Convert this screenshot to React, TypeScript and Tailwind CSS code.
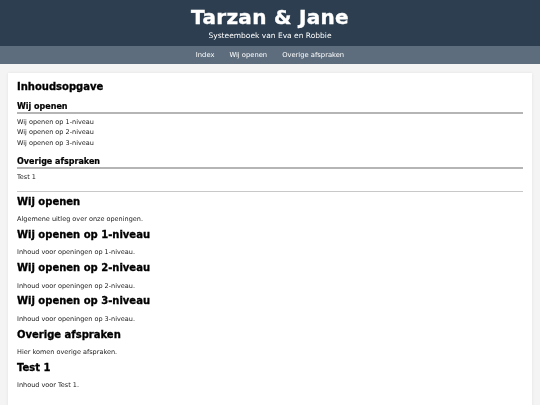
export default function App() {
  const toc = [
    { title: "Wij openen", items: ["Wij openen op 1-niveau", "Wij openen op 2-niveau", "Wij openen op 3-niveau"] },
    { title: "Overige afspraken", items: ["Test 1"] },
  ];
  const sections = [
    { title: "Wij openen", body: "Algemene uitleg over onze openingen." },
    { title: "Wij openen op 1-niveau", body: "Inhoud voor openingen op 1-niveau." },
    { title: "Wij openen op 2-niveau", body: "Inhoud voor openingen op 2-niveau." },
    { title: "Wij openen op 3-niveau", body: "Inhoud voor openingen op 3-niveau." },
    { title: "Overige afspraken", body: "Hier komen overige afspraken." },
    { title: "Test 1", body: "Inhoud voor Test 1." },
  ];

  return (
    <div className="min-h-screen bg-[#f4f4f4] text-[#1a1a1a]" style={{ fontFamily: "'DejaVu Sans', Verdana, sans-serif" }}>
      <header className="bg-[#2c3e50] text-white text-center h-[46px] pt-[5px]">
        <h1 className="text-[20px] font-bold leading-[24px] tracking-[0.3px] grayscale [-webkit-text-stroke:0.4px_white]">
          Tarzan &amp; Jane
        </h1>
        <p className="text-[7.5px] leading-[10px] mt-[2px] grayscale">Systeemboek van Eva en Robbie</p>
      </header>
      <nav className="bg-[#5d6d7e] h-[18px] flex justify-center items-center gap-[15px] text-white text-[6.75px]">
        <a className="grayscale">Index</a>
        <a className="grayscale">Wij openen</a>
        <a className="grayscale">Overige afspraken</a>
      </nav>

      <main className="mx-[8px] mt-[9px] bg-white px-[9px] pt-[6.5px] pb-[24px] shadow-[0_0_3px_rgba(0,0,0,0.08)] grayscale">
        <h2 className="text-[10px] font-bold text-black leading-[14px] mb-[8.5px] [-webkit-text-stroke:0.3px_black]">
          Inhoudsopgave
        </h2>
        {toc.map((g) => (
          <div key={g.title} className="mb-[9px]">
            <h3 className="text-[8px] font-bold text-black leading-[10px] border-b-2 border-[#b5b5b5] mb-[2.5px] [-webkit-text-stroke:0.2px_black]">
              {g.title}
            </h3>
            {g.items.map((i) => (
              <p key={i} className="text-[6.5px] leading-[10.5px]">{i}</p>
            ))}
          </div>
        ))}
        <hr className="border-0 border-t border-[#c8c8c8] mb-[2.5px]" />

        {sections.map((s) => (
          <section key={s.title}>
            <h2 className="text-[10px] font-bold text-black leading-[14px] mb-[5.5px] [-webkit-text-stroke:0.3px_black]">
              {s.title}
            </h2>
            <p className="text-[6.5px] leading-[10px] mb-[3.8px]">{s.body}</p>
          </section>
        ))}
      </main>
    </div>
  );
}
